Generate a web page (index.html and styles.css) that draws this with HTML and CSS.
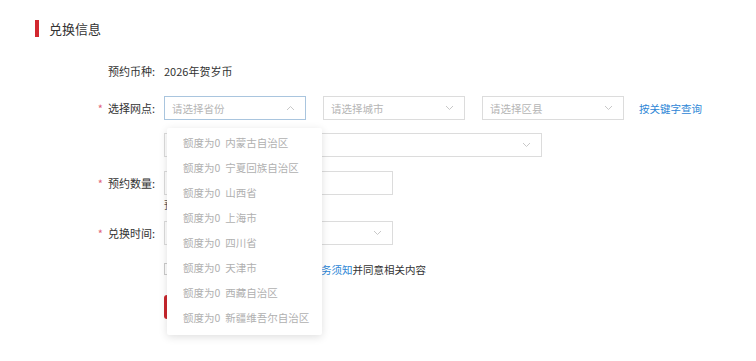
FILE: index.html
```html
<!DOCTYPE html>
<html lang="zh-CN">
<head>
    <meta charset="UTF-8">
    <meta name="viewport" content="width=device-width, initial-scale=1.0">
    <title>兑换信息</title>
    <link rel="stylesheet" href="styles.css">
</head>
<body>
    <!-- 标题 -->
    <div class="section-title">
        <span class="title-bar"></span>
        <h2>兑换信息</h2>
    </div>

    <div class="form">
        <!-- 预约币种 -->
        <div class="row row-coin">
            <label class="label">预约币种:</label>
            <span class="value">2026年贺岁币</span>
        </div>

        <!-- 选择网点 -->
        <div class="row row-area">
            <label class="label"><i class="star">*</i>选择网点:</label>
            <div class="select select-sm is-open">
                <span class="placeholder">请选择省份</span>
                <svg class="arrow" width="9" height="6" viewBox="0 0 9 6"><polyline points="1,5 4.5,1.5 8,5" fill="none" stroke="#c8c8c8" stroke-width="1"/></svg>
                <ul class="dropdown">
                    <li><span class="quota">额度为0</span>内蒙古自治区</li>
                    <li><span class="quota">额度为0</span>宁夏回族自治区</li>
                    <li><span class="quota">额度为0</span>山西省</li>
                    <li><span class="quota">额度为0</span>上海市</li>
                    <li><span class="quota">额度为0</span>四川省</li>
                    <li><span class="quota">额度为0</span>天津市</li>
                    <li><span class="quota">额度为0</span>西藏自治区</li>
                    <li><span class="quota">额度为0</span>新疆维吾尔自治区</li>
                </ul>
            </div>
            <div class="select select-sm">
                <span class="placeholder">请选择城市</span>
                <svg class="arrow" width="9" height="6" viewBox="0 0 9 6"><polyline points="1,1 4.5,4.5 8,1" fill="none" stroke="#c8c8c8" stroke-width="1"/></svg>
            </div>
            <div class="select select-sm">
                <span class="placeholder">请选择区县</span>
                <svg class="arrow" width="9" height="6" viewBox="0 0 9 6"><polyline points="1,1 4.5,4.5 8,1" fill="none" stroke="#c8c8c8" stroke-width="1"/></svg>
            </div>
            <a class="link" href="#">按关键字查询</a>
        </div>

        <!-- 网点（被下拉列表遮住） -->
        <div class="row row-branch">
            <span class="label"></span>
            <div class="select select-lg">
                <span class="placeholder"></span>
                <svg class="arrow" width="9" height="6" viewBox="0 0 9 6"><polyline points="1,1 4.5,4.5 8,1" fill="none" stroke="#c8c8c8" stroke-width="1"/></svg>
            </div>
        </div>

        <!-- 预约数量 -->
        <div class="row row-count">
            <label class="label"><i class="star">*</i>预约数量:</label>
            <div class="field">
                <input class="input" type="text">
                <p class="hint">预</p>
            </div>
        </div>

        <!-- 兑换时间 -->
        <div class="row row-time">
            <label class="label"><i class="star">*</i>兑换时间:</label>
            <div class="select select-md">
                <span class="placeholder"></span>
                <svg class="arrow" width="9" height="6" viewBox="0 0 9 6"><polyline points="1,1 4.5,4.5 8,1" fill="none" stroke="#c8c8c8" stroke-width="1"/></svg>
            </div>
        </div>

        <!-- 协议 -->
        <div class="row row-agree">
            <span class="label"></span>
            <span class="checkbox"></span>
            <span class="agree-text"><a href="#">务须知</a>并同意相关内容</span>
        </div>

        <div class="row row-submit">
            <span class="label"></span>
            <button class="btn-submit"></button>
        </div>
    </div>
</body>
</html>
```

FILE: styles.css
```css
* {
    margin: 0;
    padding: 0;
    box-sizing: border-box;
}

html,
body {
    min-height: 361px;
}

body {
    background-color: #ffffff;
    font-family: "Noto Sans CJK SC", "Noto Sans", sans-serif;
    font-size: 10.5px;
    color: #333333;
}

/* 标题 */
.section-title {
    display: flex;
    align-items: center;
    margin-top: 20px;
    padding-left: 35px;
    height: 17px;
}

.title-bar {
    width: 4px;
    height: 17px;
    background-color: #d2282f;
    margin-right: 10px;
}

.section-title h2 {
    font-size: 13px;
    font-weight: normal;
    color: #333333;
    line-height: 17px;
}

/* 表单 */
.form {
    margin-top: 22px;
}

.row {
    display: flex;
    align-items: center;
}

.label {
    width: 155px;
    margin-right: 9px;
    text-align: right;
    font-size: 11px;
    color: #333333;
    flex-shrink: 0;
}

.value {
    font-size: 11px;
}

.star {
    font-style: normal;
    color: #e0637a;
    margin-right: 5px;
}

.row-coin {
    height: 24px;
}

.row-area {
    margin-top: 13px;
}

.row-branch {
    margin-top: 13px;
}

.row-count {
    margin-top: 14px;
    align-items: flex-start;
}

.row-count .label {
    line-height: 24px;
}

.row-time {
    margin-top: 9px;
}

.row-agree {
    margin-top: 16px;
    height: 16px;
}

.row-submit {
    margin-top: 18px;
}

/* 下拉框 */
.select {
    position: relative;
    height: 24px;
    border: 1px solid #dcdcdc;
    display: flex;
    align-items: center;
    justify-content: space-between;
    padding: 0 10px 0 7px;
    background-color: #ffffff;
}

.select-sm {
    width: 142px;
    margin-right: 17px;
}

.select-lg {
    width: 378px;
}

.select-md {
    width: 229px;
}

.select.is-open {
    border-color: #a9c5de;
}

.placeholder {
    color: #b5b5b5;
}

.link {
    color: #2d86d6;
    text-decoration: none;
    margin-left: -2px;
}

/* 展开的省份列表 */
.dropdown {
    position: absolute;
    top: 31px;
    left: 2px;
    width: 155px;
    list-style: none;
    background-color: #ffffff;
    box-shadow: 0 2px 8px rgba(0, 0, 0, 0.13);
    border-radius: 2px;
    padding: 2px 0 5px;
    z-index: 10;
}

.dropdown li {
    height: 25px;
    line-height: 25px;
    padding-left: 16px;
    color: #b0b0b0;
    white-space: nowrap;
}

.quota {
    margin-right: 5px;
}

/* 输入框 */
.input {
    display: block;
    width: 229px;
    height: 24px;
    border: 1px solid #dcdcdc;
    outline: none;
}

.hint {
    margin-top: 3px;
    color: #555555;
    line-height: 14px;
}

/* 协议：前半句被下拉列表遮住 */
.checkbox {
    width: 12px;
    height: 12px;
    border: 1px solid #cccccc;
    margin-right: 145px;
}

.agree-text a {
    color: #2d86d6;
    text-decoration: none;
}

.btn-submit {
    width: 110px;
    height: 24px;
    border: none;
    border-radius: 3px;
    background-color: #c9262d;
}
```
